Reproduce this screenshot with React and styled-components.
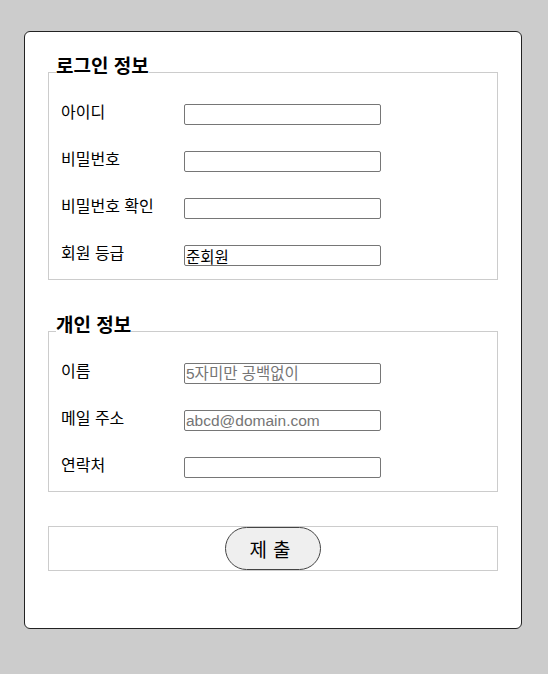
import React from "react";
import styled, { createGlobalStyle } from "styled-components";

const GlobalStyle = createGlobalStyle`
  body {
    margin: 0;
    background: #cccccc;
    font-family: "Liberation Sans", "Noto Sans CJK KR", sans-serif;
  }
`;

const Page = styled.div`
  padding: 31px 0 0 24px;
`;

const Card = styled.form`
  box-sizing: border-box;
  width: 498px;
  height: 598px;
  padding: 24px 23px 23px;
  background: #ffffff;
  border: 1px solid #222222;
  border-radius: 6px;
`;

const Group = styled.fieldset`
  margin: 0 0 ${(p) => p.$spacing}px;
  padding: 2px 12px 0 7px;
  border: 1px solid #cccccc;
  min-width: 0;
`;

const Legend = styled.legend`
  padding: 0 0 11px;
  font-size: 19px;
  line-height: 22px;
  font-weight: bold;
  color: #000;
`;

const Row = styled.div`
  display: grid;
  grid-template-columns: 123px 197px;
  align-items: center;
  height: 47px;
  padding-left: 5px;
`;

const Label = styled.label`
  font-size: 16px;
  line-height: 20px;
  color: #000;
  margin-top: -3px;
`;

const Input = styled.input`
  box-sizing: border-box;
  width: 197px;
  height: 21px;
  padding: 0 1px;
  border: 1px solid #767676;
  border-radius: 2px;
  font-family: "Liberation Sans", "Noto Sans CJK KR", sans-serif;
  font-size: 15.5px;
  color: #000;
  outline: none;

  &::placeholder {
    color: #757575;
  }
`;

const SubmitBar = styled.div`
  display: flex;
  justify-content: center;
  align-items: center;
  height: 43px;
  border: 1px solid #cccccc;
`;

const SubmitButton = styled.button`
  box-sizing: border-box;
  width: 96px;
  height: 43px;
  padding: 0;
  background: #efefef;
  border: 1px solid #444444;
  border-radius: 22px;
  font-family: "Liberation Sans", "Noto Sans CJK KR", sans-serif;
  font-size: 19px;
  letter-spacing: 6px;
  color: #000;
`;

const loginFields = [
  { id: "userId", label: "아이디", type: "text" },
  { id: "pw", label: "비밀번호", type: "password" },
  { id: "pwCheck", label: "비밀번호 확인", type: "password" },
  { id: "grade", label: "회원 등급", type: "text", value: "준회원" },
];

const personalFields = [
  { id: "name", label: "이름", type: "text", placeholder: "5자미만 공백없이" },
  { id: "email", label: "메일 주소", type: "email", placeholder: "abcd@domain.com" },
  { id: "phone", label: "연락처", type: "tel" },
];

const FieldRow = ({ field }) => (
  <Row>
    <Label htmlFor={field.id}>{field.label}</Label>
    <Input
      id={field.id}
      type={field.type}
      placeholder={field.placeholder}
      defaultValue={field.value}
      readOnly={!!field.value}
    />
  </Row>
);

const App = () => {
  return (
    <>
      <GlobalStyle />
      <Page>
        <Card onSubmit={(e) => e.preventDefault()}>
          <Group $spacing={35}>
            <Legend>로그인 정보</Legend>
            {loginFields.map((f) => (
              <FieldRow key={f.id} field={f} />
            ))}
          </Group>
          <Group $spacing={34}>
            <Legend>개인 정보</Legend>
            {personalFields.map((f) => (
              <FieldRow key={f.id} field={f} />
            ))}
          </Group>
          <SubmitBar>
            <SubmitButton type="submit">제출</SubmitButton>
          </SubmitBar>
        </Card>
      </Page>
    </>
  );
};

export default App;
